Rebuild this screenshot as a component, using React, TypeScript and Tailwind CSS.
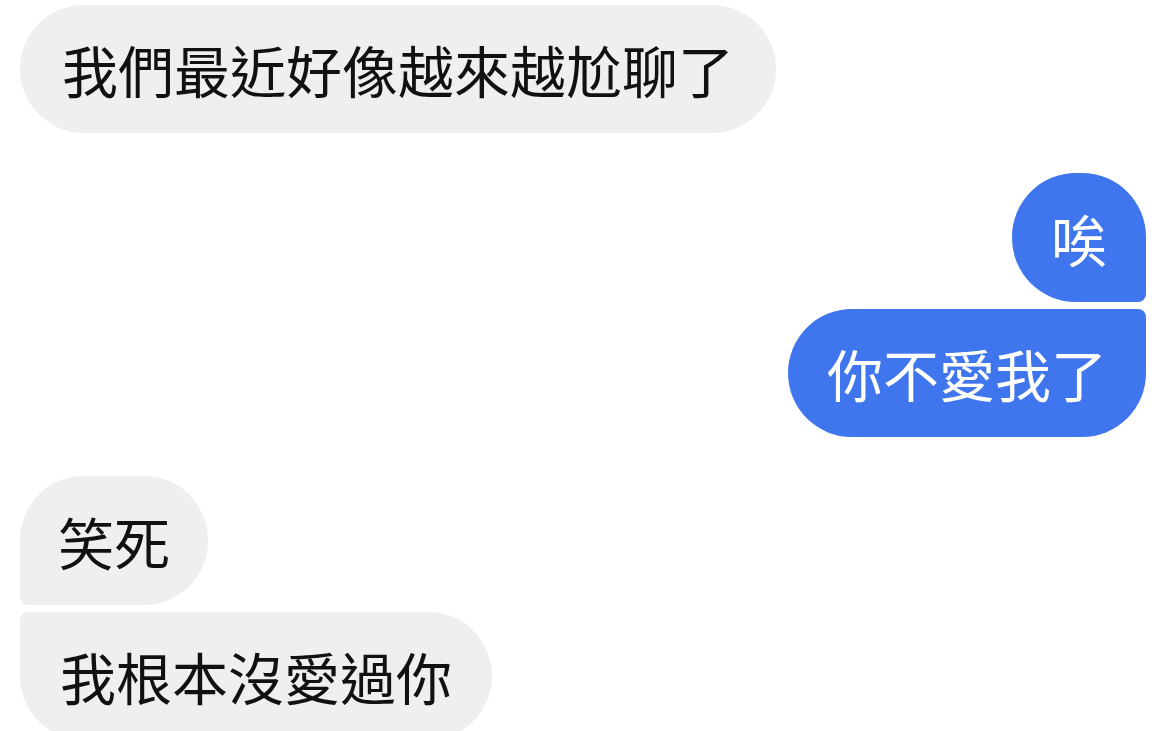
import React from "react";

const font = { fontFamily: '"Noto Sans CJK TC", "Noto Sans CJK SC", sans-serif' };

export default function App() {
  return (
    <div
      className="w-[1170px] h-[731px] overflow-hidden bg-white flex flex-col pt-[5px] pl-[20px] pr-[24px]"
      style={font}
    >
      <div className="self-start shrink-0 h-[128px] flex items-center px-[42px] rounded-[64px] bg-[#efefef] text-[56px] text-[#111] whitespace-nowrap">
        我們最近好像越來越尬聊了
      </div>

      <div className="self-end shrink-0 mt-[40px] h-[129px] flex items-center px-[39px] rounded-[64px] rounded-br-[8px] bg-[#3f75ed] text-[56px] text-white whitespace-nowrap">
        唉
      </div>
      <div className="self-end shrink-0 mt-[7px] h-[128px] flex items-center px-[39px] rounded-[64px] rounded-tr-[8px] bg-[#3f75ed] text-[56px] text-white whitespace-nowrap">
        你不愛我了
      </div>

      <div className="self-start shrink-0 mt-[39px] h-[129px] flex items-center px-[38px] rounded-[64px] rounded-bl-[8px] bg-[#efefef] text-[56px] text-[#111] whitespace-nowrap">
        笑死
      </div>
      <div className="self-start shrink-0 mt-[7px] h-[128px] flex items-center px-[40px] rounded-[64px] rounded-tl-[8px] bg-[#efefef] text-[56px] text-[#111] whitespace-nowrap">
        我根本沒愛過你
      </div>
    </div>
  );
}
